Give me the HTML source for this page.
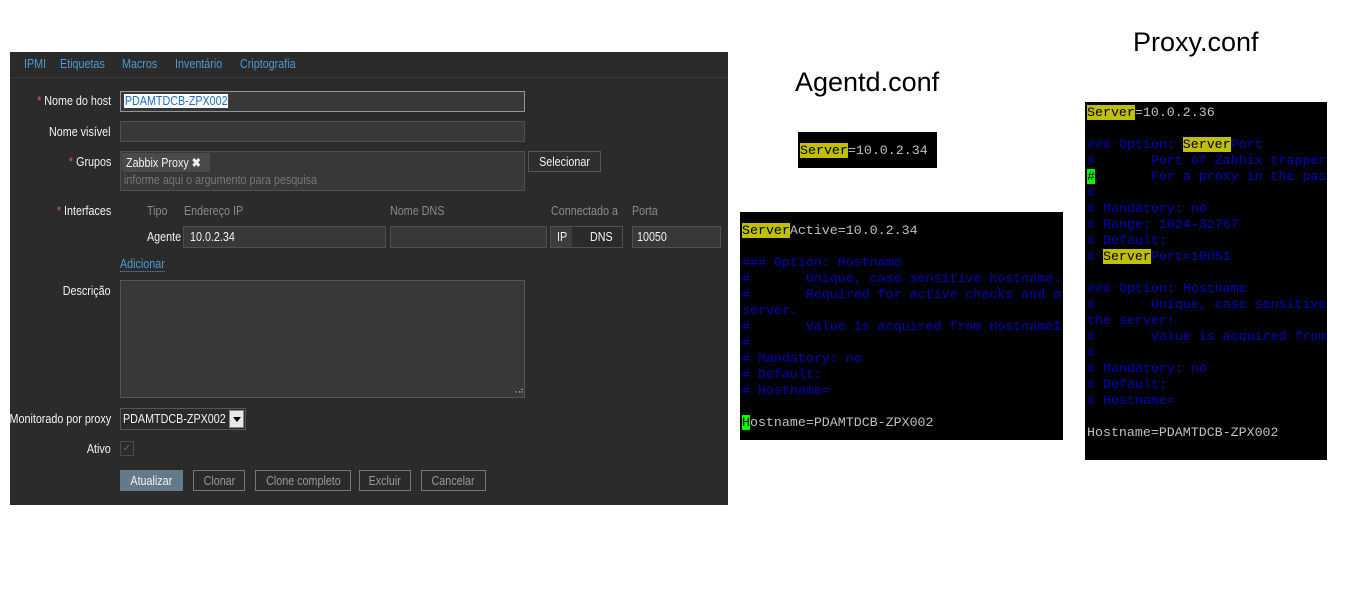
<!DOCTYPE html>
<html><head><meta charset="utf-8"><style>
*{margin:0;padding:0;box-sizing:border-box}
body{width:1360px;height:597px;background:#fff;position:relative;overflow:hidden;font-family:"Liberation Sans",sans-serif}
.a{position:absolute}
#panel{left:10px;top:52px;width:718px;height:453px;background:#2b2b2b;overflow:hidden}
.n{font-size:12.5px;transform:scaleX(.86);transform-origin:0 50%;white-space:nowrap}
.tab{color:#4d9ad4;top:5px}
.lbl{color:#f2f2f2;font-size:12.5px;text-align:right;white-space:nowrap;transform:scaleX(.86);transform-origin:100% 50%}
.star{color:#e45959}
.inp{background:#383838;border:1px solid #4f4f4f}
.gr{color:#8a8a8a}
.btn{border:1px solid #777;color:#9a9a9a;font-size:12.5px;text-align:center;line-height:20px;height:21px}
.btn span{display:inline-block;transform:scaleX(.86)}
.term{background:#000;font-family:"Liberation Mono",monospace;font-size:13.3px;line-height:16px;white-space:pre;color:#c0c0c0;overflow:hidden}
.c{color:#0000c0}
.h{background:#c0c000;color:#000}
.g{background:#00ff00;color:#000}
.title{font-size:27px;color:#000}
</style></head><body>
<div id="panel" class="a">
 <div class="a" style="left:0;top:25px;width:718px;height:1px;background:#3a3a3a"></div>
 <div class="a n tab" style="left:14px">IPMI</div>
 <div class="a n tab" style="left:50px">Etiquetas</div>
 <div class="a n tab" style="left:112px">Macros</div>
 <div class="a n tab" style="left:165px">Inventário</div>
 <div class="a n tab" style="left:230px">Criptografia</div>

 <div class="a lbl" style="right:617px;top:42px"><span class="star">*</span> Nome do host</div>
 <div class="a inp" style="left:110px;top:39px;width:405px;height:21px;border-color:#8a98a4"></div>
 <div class="a n" style="left:114px;top:42px;background:#fff;color:#1a6ecc;padding:0 1px">PDAMTDCB-ZPX002</div>

 <div class="a lbl" style="right:617px;top:73px">Nome visível</div>
 <div class="a inp" style="left:110px;top:69px;width:405px;height:21px"></div>

 <div class="a lbl" style="right:617px;top:103px"><span class="star">*</span> Grupos</div>
 <div class="a inp" style="left:110px;top:99px;width:405px;height:40px"></div>
 <div class="a" style="left:112px;top:101px;width:88px;height:19px;background:#4a4a4a"></div>
 <div class="a n" style="left:116px;top:103px;color:#f2f2f2">Zabbix Proxy <b>✖</b></div>
 <div class="a n gr" style="left:114px;top:121px;color:#777">informe aqui o argumento para pesquisa</div>
 <div class="a btn" style="left:518px;top:99px;width:73px;color:#f2f2f2;border-color:#555;background:#2e2e2e"><span>Selecionar</span></div>

 <div class="a lbl" style="right:617px;top:152px"><span class="star">*</span> Interfaces</div>
 <div class="a n gr" style="left:137px;top:152px">Tipo</div>
 <div class="a n gr" style="left:174px;top:152px">Endereço IP</div>
 <div class="a n gr" style="left:380px;top:152px">Nome DNS</div>
 <div class="a n gr" style="left:541px;top:152px">Connectado a</div>
 <div class="a n gr" style="left:622px;top:152px">Porta</div>
 <div class="a n" style="left:137px;top:178px;color:#f2f2f2">Agente</div>
 <div class="a inp" style="left:173px;top:174px;width:203px;height:22px"></div>
 <div class="a n" style="left:180px;top:178px;color:#f2f2f2">10.0.2.34</div>
 <div class="a inp" style="left:380px;top:174px;width:157px;height:22px"></div>
 <div class="a" style="left:540px;top:174px;width:73px;height:22px;border:1px solid #4f4f4f;background:#2b2b2b"></div>
 <div class="a" style="left:541px;top:175px;width:21px;height:20px;background:#3d3d3d"></div>
 <div class="a n" style="left:547px;top:178px;color:#f2f2f2">IP</div>
 <div class="a n" style="left:580px;top:178px;color:#f2f2f2">DNS</div>
 <div class="a inp" style="left:622px;top:174px;width:89px;height:22px"></div>
 <div class="a n" style="left:627px;top:178px;color:#f2f2f2">10050</div>
 <div class="a n" style="left:110px;top:205px;color:#4d9ad4;border-bottom:1px dotted #4d9ad4">Adicionar</div>

 <div class="a lbl" style="right:617px;top:232px">Descrição</div>
 <div class="a inp" style="left:110px;top:228px;width:405px;height:118px;border-color:#555"></div>
 <div class="a" style="left:502px;top:334px;font-size:8px;color:#ccc">⠠⠴</div>

 <div class="a lbl" style="right:617px;top:360px">Monitorado por proxy</div>
 <div class="a" style="left:110px;top:356px;width:126px;height:22px;border:1px solid #555;background:#2b2b2b"></div>
 <div class="a n" style="left:113px;top:360px;color:#f2f2f2">PDAMTDCB-ZPX002</div>
 <div class="a" style="left:219px;top:358px;width:15px;height:18px;background:#e8e8e8;border:1px solid #888"></div>
 <div class="a" style="left:223px;top:365px;width:0;height:0;border-left:4px solid transparent;border-right:4px solid transparent;border-top:5px solid #000"></div>

 <div class="a lbl" style="right:617px;top:390px">Ativo</div>
 <div class="a" style="left:110px;top:389px;width:14px;height:15px;border:1px solid #4a4a4a;color:#666;font-size:10px;line-height:13px;text-align:center">✓</div>

 <div class="a btn" style="left:110px;top:418px;width:63px;background:#647a88;border-color:#647a88;color:#f2f2f2"><span>Atualizar</span></div>
 <div class="a btn" style="left:183px;top:418px;width:52px"><span>Clonar</span></div>
 <div class="a btn" style="left:245px;top:418px;width:96px"><span>Clone completo</span></div>
 <div class="a btn" style="left:349px;top:418px;width:52px"><span>Excluir</span></div>
 <div class="a btn" style="left:411px;top:418px;width:65px"><span>Cancelar</span></div>
</div>

<div class="a title" style="left:795px;top:67px">Agentd.conf</div>
<div class="a title" style="left:1133px;top:27px">Proxy.conf</div>

<div class="a term" style="left:798px;top:132px;width:139px;height:36px;padding:11px 0 0 2px"><span class="h">Server</span>=10.0.2.34</div>

<div class="a term" style="left:740px;top:212px;width:323px;height:228px;padding:11px 0 0 2px"><span class="h">Server</span>Active=10.0.2.34

<span class="c">### Option: Hostname
#       Unique, case sensitive hostname.
#       Required for active checks and m
server.
#       Value is acquired from HostnameI
#
# Mandatory: no
# Default:
# Hostname=</span>

<span class="g">H</span>ostname=PDAMTDCB-ZPX002</div>

<div class="a term" style="left:1085px;top:102px;width:242px;height:358px;padding:3px 0 0 2px"><span class="h">Server</span>=10.0.2.36

<span class="c">### Option: <span class="h">Server</span>Port
#       Port of Zabbix trapper
<span class="g">#</span>       For a proxy in the pas
#
# Mandatory: no
# Range: 1024-32767
# Default:
# <span class="h">Server</span>Port=10051

### Option: Hostname
#       Unique, case sensitive
the server!
#       Value is acquired from
#
# Mandatory: no
# Default:
# Hostname=</span>

Hostname=PDAMTDCB-ZPX002</div>
</body></html>
